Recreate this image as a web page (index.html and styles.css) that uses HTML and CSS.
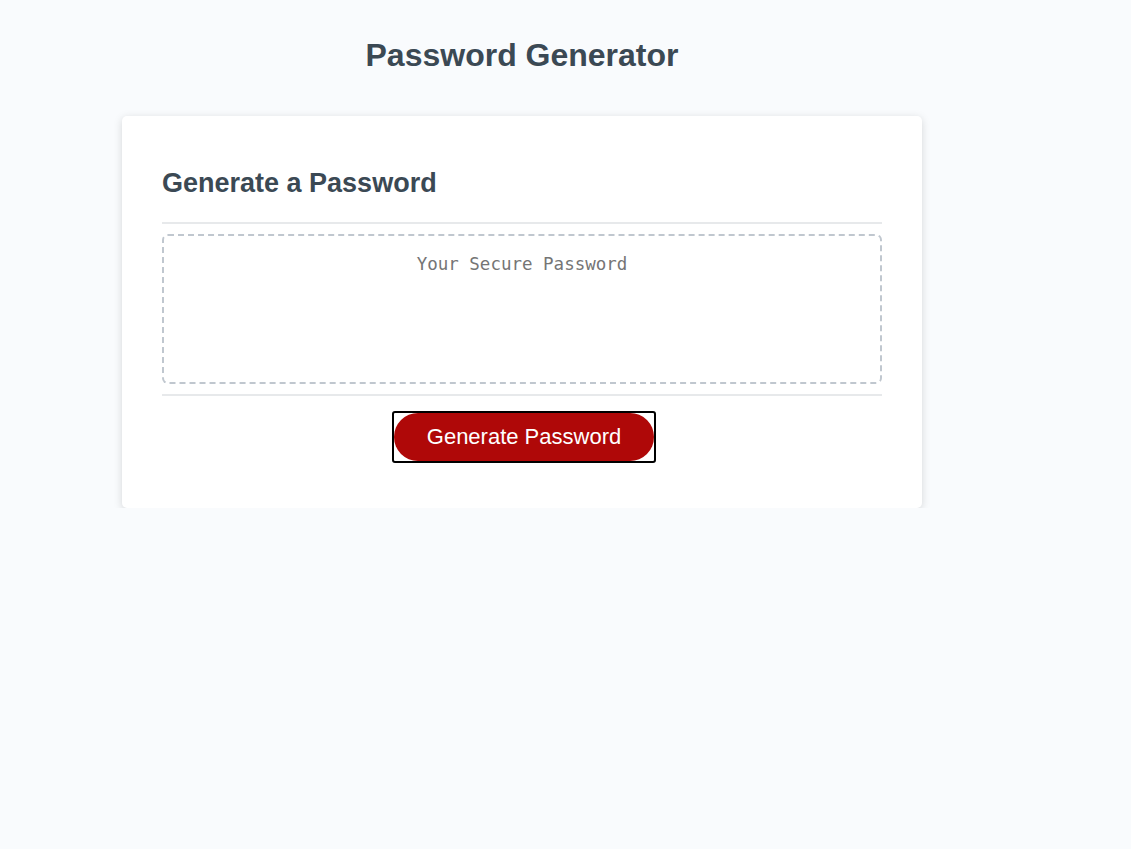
FILE: index.html
```html
<!DOCTYPE html>
<html lang="en">
<head>
<meta charset="UTF-8">
<title>Password Generator</title>
<link rel="stylesheet" href="styles.css">
</head>
<body>
<div class="wrapper">
  <header class="page-header">
    <h1>Password Generator</h1>
  </header>
  <div class="card">
    <div class="card-header">
      <h2>Generate a Password</h2>
    </div>
    <div class="card-body">
      <textarea readonly placeholder="Your Secure Password" aria-label="Generated Password"></textarea>
    </div>
    <div class="card-footer">
      <span class="focus-ring"><button class="btn" type="button">Generate Password</button></span>
    </div>
  </div>
</div>
</body>
</html>
```
FILE: styles.css
```css
* { box-sizing: border-box; }

body {
  margin: 0;
  font-family: "Liberation Sans", Arial, sans-serif;
  background-color: #f9fbfd;
}

.wrapper {
  width: 1044px;
  padding: 16px 20px 0;
}

.page-header {
  text-align: center;
  padding: 0 20px 21px;
  color: #3b4954;
}

.page-header h1 {
  margin: 21px 0;
  font-size: 32px;
  font-weight: bold;
}

.card {
  background-color: #fff;
  border-radius: 5px;
  box-shadow: rgba(0, 0, 0, 0.15) 0 2px 8px 0;
  color: #3b4954;
  font-size: 18px;
  margin: 0 auto;
  max-width: 800px;
  padding: 30px 40px;
}

.card-header h2 {
  margin: 22px 0 23px;
  font-size: 27px;
  font-weight: bold;
}

.card-header::after,
.card-footer::before {
  content: "";
  display: block;
  width: 100%;
  height: 2px;
  background: #e7e9eb;
}

.card-body {
  padding: 10px 0;
}

.card-body textarea {
  display: block;
  width: 100%;
  height: 150px;
  padding: 18px 15px 15px;
  font-family: "DejaVu Sans Mono", "Liberation Mono", monospace;
  font-size: 17.5px;
  text-align: center;
  border: 2px dashed #c0c7cf;
  border-radius: 6px;
  resize: none;
  overflow: hidden;
  outline: none;
  color: #3b4954;
}

.card-body textarea::placeholder {
  color: #757575;
}

.card-footer {
  display: flex;
  flex-direction: column;
  align-items: center;
}

.focus-ring {
  display: block;
  margin: 15px 16px 15px 20px;
  border: 2px solid #000;
  border-radius: 3px;
}

.btn {
  display: block;
  border: none;
  background-color: #af0808;
  border-radius: 25px;
  color: #fff;
  font-family: "Liberation Sans", Arial, sans-serif;
  font-size: 22px;
  line-height: 22px;
  margin: 0;
  padding: 13px 33px;
  text-align: center;
  cursor: pointer;
}
```
